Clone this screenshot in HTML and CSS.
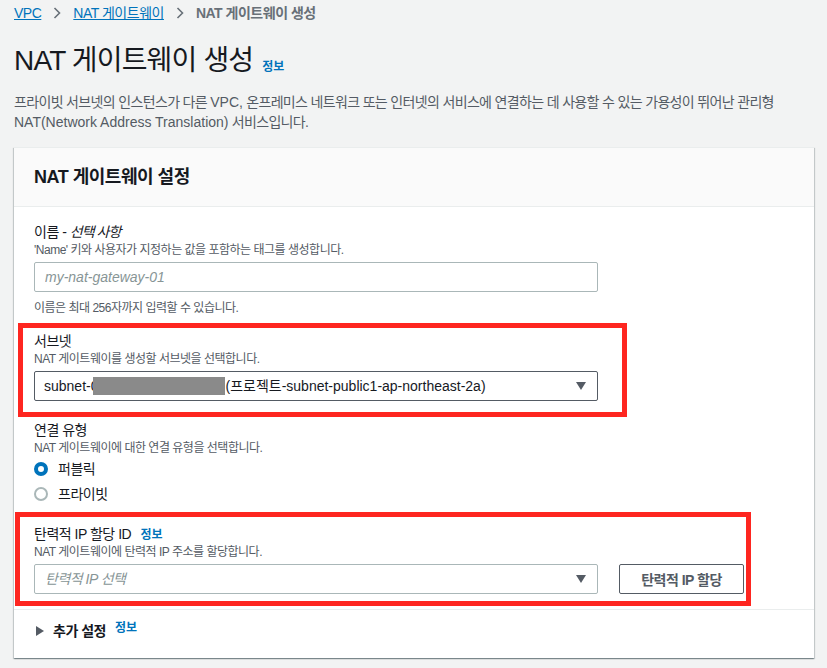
FILE: index.html
```html
<!DOCTYPE html>
<html lang="ko">
    <head>
        <meta charset="UTF-8"/>
        <title>NAT 게이트웨이 생성</title>
        <link rel="stylesheet" href="styles.css">
    </head>
    <body>
        <div class="page">
            <nav class="crumbs">
                <a href="#">VPC</a>
                <svg class="chev" width="8" height="12" viewBox="0 0 8 12"><path d="M1.5 1 L6.5 6 L1.5 11" fill="none" stroke="#687078" stroke-width="1.6"/></svg>
                <a href="#">NAT 게이트웨이</a>
                <svg class="chev" width="8" height="12" viewBox="0 0 8 12"><path d="M1.5 1 L6.5 6 L1.5 11" fill="none" stroke="#687078" stroke-width="1.6"/></svg>
                <span class="current">NAT 게이트웨이 생성</span>
            </nav>

            <h1 class="title">NAT 게이트웨이 생성 <a class="info" href="#">정보</a></h1>
            <p class="lead">프라이빗 서브넷의 인스턴스가 다른 <span class="en">VPC,</span> 온프레미스 네트워크 또는 인터넷의 서비스에 연결하는 데 사용할 수 있는 가용성이 뛰어난 관리형<br><span class="en">NAT(Network Address Translation)</span> 서비스입니다.</p>

            <section class="card">
                <header class="card-head">
                    <h2>NAT 게이트웨이 설정</h2>
                </header>

                <div class="card-body">
                    <!-- 이름 -->
                    <div class="field">
                        <div class="label">이름 - <i>선택 사항</i></div>
                        <div class="desc">'Name' 키와 사용자가 지정하는 값을 포함하는 태그를 생성합니다.</div>
                        <input class="text-in" type="text" placeholder="my-nat-gateway-01">
                        <div class="hint">이름은 최대 256자까지 입력할 수 있습니다.</div>
                    </div>

                    <!-- 서브넷 -->
                    <div class="field field-subnet">
                        <div class="mark mark-subnet"></div>
                        <div class="label">서브넷</div>
                        <div class="desc">NAT 게이트웨이를 생성할 서브넷을 선택합니다.</div>
                        <div class="select select-dark">
                            <span class="sel-text">subnet-0<span class="redact"></span>(프로젝트-subnet-public1-ap-northeast-2a)</span>
                            <svg class="caret" width="10" height="8" viewBox="0 0 10 8"><path d="M0 0 H10 L5 8 Z" fill="#545b64"/></svg>
                        </div>
                    </div>

                    <!-- 연결 유형 -->
                    <div class="field field-conn">
                        <div class="label">연결 유형</div>
                        <div class="desc">NAT 게이트웨이에 대한 연결 유형을 선택합니다.</div>
                        <div class="radio-row"><span class="radio radio-on"></span>퍼블릭</div>
                        <div class="radio-row"><span class="radio"></span>프라이빗</div>
                    </div>

                    <!-- 탄력적 IP -->
                    <div class="field field-eip">
                        <div class="mark mark-eip"></div>
                        <div class="label">탄력적 IP 할당 ID <a class="info info-inline" href="#">정보</a></div>
                        <div class="desc">NAT 게이트웨이에 탄력적 IP 주소를 할당합니다.</div>
                        <div class="eip-row">
                            <div class="select">
                                <span class="sel-place">탄력적 IP 선택</span>
                                <svg class="caret" width="10" height="8" viewBox="0 0 10 8"><path d="M0 0 H10 L5 8 Z" fill="#545b64"/></svg>
                            </div>
                            <button class="btn" type="button">탄력적 IP 할당</button>
                        </div>
                    </div>
                </div>

                <div class="card-foot">
                    <svg class="foot-caret" width="8" height="10" viewBox="0 0 8 10"><path d="M0 0 L8 5 L0 10 Z" fill="#545b64"/></svg>
                    <span class="foot-title">추가 설정</span>
                    <a class="info info-up" href="#">정보</a>
                </div>
            </section>
        </div>
    </body>
</html>
```

FILE: styles.css
```css
body {
    margin: 0;
    background: #f2f3f3;
    font-family: "Liberation Sans", "Noto Sans CJK KR", sans-serif;
    font-size: 14px;
    line-height: 20px;
    letter-spacing: -0.035em;
    color: #16191f;
}

.page {
    padding: 3px 13px 10px 14px;
}

/* latin runs keep their natural width */
.en {
    letter-spacing: 0;
}

/* breadcrumb */
.crumbs {
    display: flex;
    align-items: center;
    gap: 12px;
    height: 20px;
}
.crumbs a {
    color: #0073bb;
    text-decoration: underline;
}
.crumbs .current {
    color: #687078;
    font-weight: bold;
}

/* heading */
.title {
    margin: 20px 0 0 0;
    height: 36px;
    font-size: 28px;
    line-height: 36px;
    font-weight: normal;
    letter-spacing: -0.03em;
}
.info {
    color: #0073bb;
    font-size: 12px;
    font-weight: bold;
    text-decoration: none;
    letter-spacing: 0;
}
.title .info {
    margin-left: 2px;
    vertical-align: -1px;
}
.lead {
    margin: 13px 0 0 0;
    height: 40px;
    color: #545b64;
    white-space: nowrap;
    letter-spacing: -0.047em;
}

/* card */
.card {
    margin-top: 15px;
    background: #fff;
    border-top: 1px solid #eaeded;
    box-shadow: 0 1px 1px 0 rgba(0, 28, 36, 0.3), 1px 1px 1px 0 rgba(0, 28, 36, 0.15), -1px 1px 1px 0 rgba(0, 28, 36, 0.15);
}
.card-head {
    background: #fafafa;
    border-bottom: 1px solid #eaeded;
    padding: 18px 20px;
}
.card-head h2 {
    margin: 0;
    height: 22px;
    font-size: 18px;
    line-height: 22px;
    font-weight: bold;
}
.card-body {
    padding: 15px 20px 15px 20px;
}

.field {
    position: relative;
}
.field-subnet { margin-top: 15px; }
.field-conn { margin-top: 19px; }
.field-eip { margin-top: 18px; }

.label {
    height: 20px;
    font-size: 14px;
    line-height: 20px;
}
.label i {
    letter-spacing: -0.07em;
}
.desc, .hint {
    height: 16px;
    font-size: 12px;
    line-height: 16px;
    color: #545b64;
}
.hint {
    margin-top: 8px;
}

.text-in, .select {
    box-sizing: border-box;
    width: 564px;
    height: 30px;
    margin-top: 4px;
    border: 1px solid #aab7b8;
    border-radius: 2px;
    background: #fff;
    font-family: inherit;
    font-size: 14px;
    letter-spacing: inherit;
    padding: 0 10px;
    display: block;
}
.text-in {
    letter-spacing: 0;
}
.text-in::placeholder {
    color: #879596;
    font-style: italic;
}
.select {
    display: flex;
    align-items: center;
    justify-content: space-between;
    padding: 0 11px 0 9px;
}
.select-dark {
    border-color: #545b64;
}
.sel-text {
    white-space: nowrap;
    letter-spacing: 0;
}
.redact {
    display: inline-block;
    width: 132px;
    height: 18px;
    margin-left: -5px;
    background: #8a8a8a;
    vertical-align: -4px;
}
.sel-place {
    color: #879596;
    font-style: italic;
    padding-left: 1px;
}

/* radios */
.radio-row {
    display: flex;
    align-items: center;
    gap: 10px;
    height: 25px;
}
.field-conn .radio-row:first-of-type {
    margin-top: 3px;
}
.radio {
    box-sizing: border-box;
    width: 14px;
    height: 14px;
    border-radius: 50%;
    border: 2px solid #aab7b8;
    background: #fff;
}
.radio-on {
    border: 4px solid #0073bb;
}

/* eip */
.info-inline {
    margin-left: 6px;
}
.eip-row {
    display: flex;
    align-items: flex-start;
    gap: 21px;
}
.btn {
    box-sizing: border-box;
    margin-top: 4px;
    width: 125px;
    height: 30px;
    background: #fff;
    border: 1px solid #545b64;
    border-radius: 2px;
    color: #545b64;
    font-family: inherit;
    font-size: 14px;
    font-weight: bold;
    letter-spacing: inherit;
}

/* red annotations */
.mark {
    position: absolute;
    box-sizing: border-box;
    border: 5px solid #fe2620;
}
.mark-subnet {
    left: -16px;
    top: -8px;
    width: 609px;
    height: 94px;
}
.mark-eip {
    left: -19px;
    top: -12px;
    width: 736px;
    height: 94px;
}

/* footer */
.card-foot {
    border-top: 1px solid #eaeded;
    padding: 11px 20px 17px 22px;
    display: flex;
    align-items: center;
    height: 20px;
}
.foot-caret {
    margin-right: 9px;
}
.foot-title {
    font-weight: bold;
}
.info-up {
    margin-left: 9px;
    position: relative;
    top: -3px;
}
```
